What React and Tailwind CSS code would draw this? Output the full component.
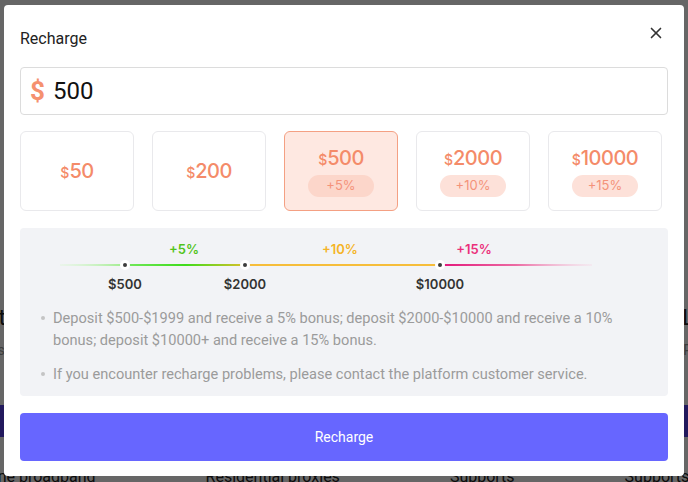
import { X } from 'lucide-react'

const amounts = [
  { value: '50' },
  { value: '200' },
  { value: '500', bonus: '+5%' },
  { value: '2000', bonus: '+10%' },
  { value: '10000', bonus: '+15%' },
]

function AmountCard({ value, bonus, active }) {
  return (
    <button
      className={
        active
          ? 'flex h-[80px] w-[114px] flex-col items-center justify-center rounded-[6px] border border-[#f4a083] bg-[#fee8e1]'
          : 'flex h-[80px] w-[114px] flex-col items-center justify-center rounded-[6px] border border-[#e9e9ec] bg-white'
      }
    >
      <div className="flex items-baseline font-['Inter',sans-serif] font-medium text-[#f48b69]">
        <span className="text-[14px]">$</span>
        <span className="text-[20px] leading-[24px] tracking-[-0.5px]">{value}</span>
      </div>
      {bonus && (
        <div
          className={
            active
              ? 'mt-[5px] flex h-[22px] w-[66px] items-center justify-center rounded-full bg-[#fcd6ca] font-[\'Inter\',sans-serif] text-[13px] text-[#f4937a]'
              : 'mt-[5px] flex h-[22px] w-[66px] items-center justify-center rounded-full bg-[#fde1d9] font-[\'Inter\',sans-serif] text-[13px] text-[#f4937a]'
          }
        >
          {bonus}
        </div>
      )}
    </button>
  )
}

function Timeline() {
  return (
    <div className="relative h-[72px] shrink-0 font-['Inter',sans-serif] text-[13px] font-semibold">
      <svg className="absolute left-0 top-0" width="647" height="72">
        <defs>
          <linearGradient id="g0" x1="0" x2="1">
            <stop offset="0" stopColor="#d8f7d0" stopOpacity="0.3" />
            <stop offset="1" stopColor="#9eec8b" />
          </linearGradient>
          <linearGradient id="g1" x1="0" x2="1">
            <stop offset="0" stopColor="#74e85e" />
            <stop offset="0.5" stopColor="#3fdc1c" />
            <stop offset="1" stopColor="#d9c02a" />
          </linearGradient>
          <linearGradient id="g3" x1="0" x2="1">
            <stop offset="0" stopColor="#e3157a" />
            <stop offset="0.5" stopColor="#ec6aa3" />
            <stop offset="1" stopColor="#f7d3e3" stopOpacity="0.3" />
          </linearGradient>
        </defs>
        <rect x="40" y="36" width="65" height="2" fill="url(#g0)" />
        <rect x="105" y="36" width="120" height="2" fill="url(#g1)" />
        <rect x="225" y="36" width="195" height="2" fill="#f6bd3a" />
        <rect x="420" y="36" width="152" height="2" fill="url(#g3)" />
        {[105, 225, 420].map((cx) => (
          <g key={cx}>
            <circle cx={cx} cy="37" r="5" fill="#ffffff" />
            <circle cx={cx} cy="37" r="2" fill="#3d3d3d" />
          </g>
        ))}
      </svg>
      <span className="absolute left-[164px] top-[12px] -translate-x-1/2 text-[#52c41a]">+5%</span>
      <span className="absolute left-[320px] top-[12px] -translate-x-1/2 text-[#f5b427]">+10%</span>
      <span className="absolute left-[454px] top-[12px] -translate-x-1/2 text-[#eb2f7b]">+15%</span>
      <span className="absolute left-[105px] top-[47px] -translate-x-1/2 text-[#333]">$500</span>
      <span className="absolute left-[225px] top-[47px] -translate-x-1/2 text-[#333]">$2000</span>
      <span className="absolute left-[420px] top-[47px] -translate-x-1/2 text-[#333]">$10000</span>
    </div>
  )
}

function Background() {
  return (
    <div className="flex h-[482px] flex-col overflow-hidden bg-white font-['Roboto',sans-serif] text-[#222]">
      <div className="h-[302px] shrink-0" />
      <div className="grid shrink-0 grid-cols-4 gap-4 text-[22px] leading-[32px]">
        <div className="-ml-[30px]">List</div>
        <div />
        <div />
        <div className="-mr-[30px] text-right">List</div>
      </div>
      <div className="grid shrink-0 grid-cols-4 gap-4 text-[14px] leading-[32px] text-[#999]">
        <div className="-ml-[30px]">Plans</div>
        <div />
        <div />
        <div className="-mr-[30px] text-right">Plans</div>
      </div>
      <div className="grid shrink-0 grid-cols-4 gap-4 text-[24px] leading-[32px]">
        <div className="-ml-[30px]">$1</div>
        <div />
        <div />
        <div className="-mr-[30px] text-right">$5</div>
      </div>
      <div className="mt-[7px] h-[32px] shrink-0 bg-[#5540e8]" />
      <div className="mt-[30px] flex shrink-0 gap-[110px] whitespace-nowrap text-[16px] leading-[20px] text-[#222]">
        <span className="-ml-[30px]">Online broadband</span>
        <span>Residential proxies</span>
        <span>Supports</span>
        <span>Supports</span>
      </div>
    </div>
  )
}

export default function App() {
  return (
    <div className="relative h-[482px] w-full overflow-hidden">
      <Background />
      <div className="fixed inset-0 flex items-center justify-center bg-black/60">
        <div className="-mt-[1px] flex h-[471px] w-[680px] flex-col rounded-[4px] bg-white px-4 pb-[15px] pt-[23px] font-['Roboto',sans-serif]">
          <div className="flex h-[22px] shrink-0 items-center justify-between">
            <h2 className="text-[16px] font-normal text-[#222]">Recharge</h2>
            <X className="-mt-[12px] mr-[3px] h-[18px] w-[18px] text-[#333]" strokeWidth={2.2} />
          </div>

          <div className="mt-[17px] flex h-[48px] shrink-0 items-center rounded-[4px] border border-[#dcdcdc] px-[9px]">
            <span className="text-[26px] font-bold text-[#f5916f]">$</span>
            <span className="ml-[8px] text-[24px] text-[#111]">500</span>
          </div>

          <div className="mt-[16px] flex shrink-0 gap-[18px]">
            {amounts.map((a) => (
              <AmountCard key={a.value} value={a.value} bonus={a.bonus} active={a.value === '500'} />
            ))}
          </div>

          <div className="mt-[17px] flex h-[168px] shrink-0 flex-col rounded-[4px] bg-[#f2f3f6]">
            <Timeline />
            <ul className="mt-[7px] flex flex-col gap-[12px] pl-[21px] pr-[16px] text-[14.6px] leading-[22px] text-[#9b9b9b]">
              <li className="flex">
                <span className="mr-[8px] mt-[9px] h-[4px] w-[4px] shrink-0 rounded-full bg-[#c4c4c4]" />
                <span>
                  Deposit $500-$1999 and receive a 5% bonus; deposit $2000-$10000 and receive a 10% bonus; deposit
                  $10000+ and receive a 15% bonus.
                </span>
              </li>
              <li className="flex">
                <span className="mr-[8px] mt-[9px] h-[4px] w-[4px] shrink-0 rounded-full bg-[#c4c4c4]" />
                <span>If you encounter recharge problems, please contact the platform customer service.</span>
              </li>
            </ul>
          </div>

          <button className="mt-[17px] h-[48px] w-full shrink-0 rounded-[4px] bg-[#6766ff] text-[14px] text-white">
            Recharge
          </button>
        </div>
      </div>
    </div>
  )
}
